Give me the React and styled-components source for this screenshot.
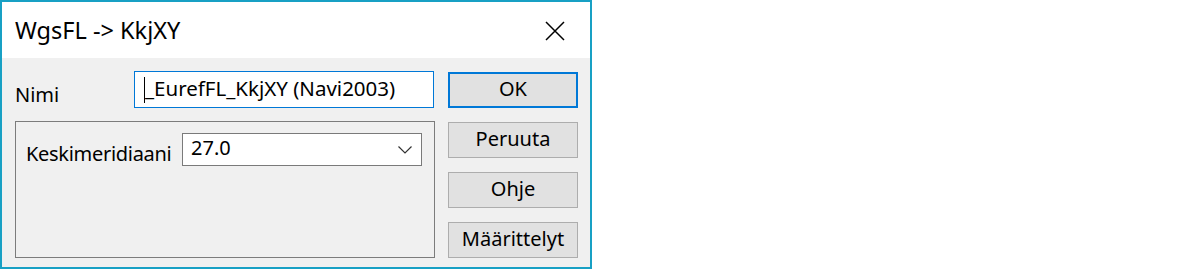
import React from 'react';
import styled, { createGlobalStyle } from 'styled-components';

const GlobalStyle = createGlobalStyle`
  body {
    margin: 0;
    background: #ffffff;
  }
`

const Window = styled.div`
  width: 592px;
  height: 269px;
  box-sizing: border-box;
  border: 2px solid #18a0c4;
  display: flex;
  flex-direction: column;
  font-family: "Noto Sans", "Open Sans", sans-serif;
  color: #000;
`

const TitleBar = styled.div`
  height: 56px;
  background: #ffffff;
  display: flex;
  align-items: center;
  justify-content: space-between;
  padding-left: 13px;
`

const Title = styled.div`
  font-size: 23.5px;
`

const CloseButton = styled.div`
  width: 70px;
  height: 56px;
  display: flex;
  align-items: center;
  justify-content: center;
  padding-top: 2px;
  box-sizing: border-box;
`

const Body = styled.div`
  flex: 1;
  background: #f0f0f0;
  display: flex;
  padding: 13px 12px 0 13px;
  gap: 13px;
`

const LeftCol = styled.div`
  width: 420px;
  display: flex;
  flex-direction: column;
`

const Row = styled.div`
  display: flex;
  align-items: flex-end;
`

const Label = styled.div`
  width: ${props => props.width}px;
  font-size: 20px;
  line-height: 24px;
  letter-spacing: ${props => props.tight ? '-0.3px' : 'normal'};
  padding-bottom: ${props => props.lift || 0}px;
`

const TextInput = styled.div`
  width: 300px;
  height: 37px;
  box-sizing: border-box;
  border: 1px solid #0078d7;
  background: #ffffff;
  display: flex;
  align-items: center;
  padding-left: 9px;
  font-size: 20.5px;
  padding-bottom: 3px;
`

const Caret = styled.span`
  display: inline-block;
  width: 1px;
  height: 26px;
  background: #000;
  margin-top: 3px;
`

const GroupBox = styled.div`
  margin-top: 13px;
  height: 137px;
  box-sizing: border-box;
  border: 1px solid #7c7c7c;
  padding: 11px 0 0 10px;
`

const Combo = styled.div`
  width: 240px;
  height: 33px;
  box-sizing: border-box;
  border: 1px solid #7a7a7a;
  background: #ffffff;
  display: flex;
  align-items: center;
  justify-content: space-between;
  padding: 0 9px 4px 8px;
  font-size: 20px;
`

const Chevron = styled.svg`
  margin-top: 4px;
`

const ButtonCol = styled.div`
  width: 130px;
  display: flex;
  flex-direction: column;
  gap: 14px;
  margin-top: 1px;
`

const Button = styled.div`
  height: 36px;
  box-sizing: border-box;
  background: #e1e1e1;
  border: ${props => props.primary ? '2px solid #0078d7' : '1px solid #adadad'};
  display: flex;
  align-items: center;
  justify-content: center;
  font-size: 20px;
  padding-bottom: 3px;
`

const buttons = ['OK', 'Peruuta', 'Ohje', 'Määrittelyt'];

const App = () => {
  return (
    <>
      <GlobalStyle />
      <Window>
        <TitleBar>
          <Title>WgsFL -&gt; KkjXY</Title>
          <CloseButton>
            <svg width="20" height="20" viewBox="0 0 20 20">
              <path d="M1 1 L19 19 M19 1 L1 19" stroke="#000" strokeWidth="1.5" fill="none" />
            </svg>
          </CloseButton>
        </TitleBar>
        <Body>
          <LeftCol>
            <Row>
              <Label width={119} lift={1}>Nimi</Label>
              <TextInput><Caret />_EurefFL_KkjXY (Navi2003)</TextInput>
            </Row>
            <GroupBox>
              <Row>
                <Label width={156} tight>Keskimeridiaani</Label>
                <Combo>
                  27.0
                  <Chevron width="14" height="8" viewBox="0 0 14 8">
                    <path d="M0.5 0.5 L7 7 L13.5 0.5" stroke="#333" strokeWidth="1.2" fill="none" />
                  </Chevron>
                </Combo>
              </Row>
            </GroupBox>
          </LeftCol>
          <ButtonCol>
            {buttons.map((b, i) =>
              <Button key={b} primary={i === 0}>{b}</Button>
            )}
          </ButtonCol>
        </Body>
      </Window>
    </>
  );
};

export default App;
